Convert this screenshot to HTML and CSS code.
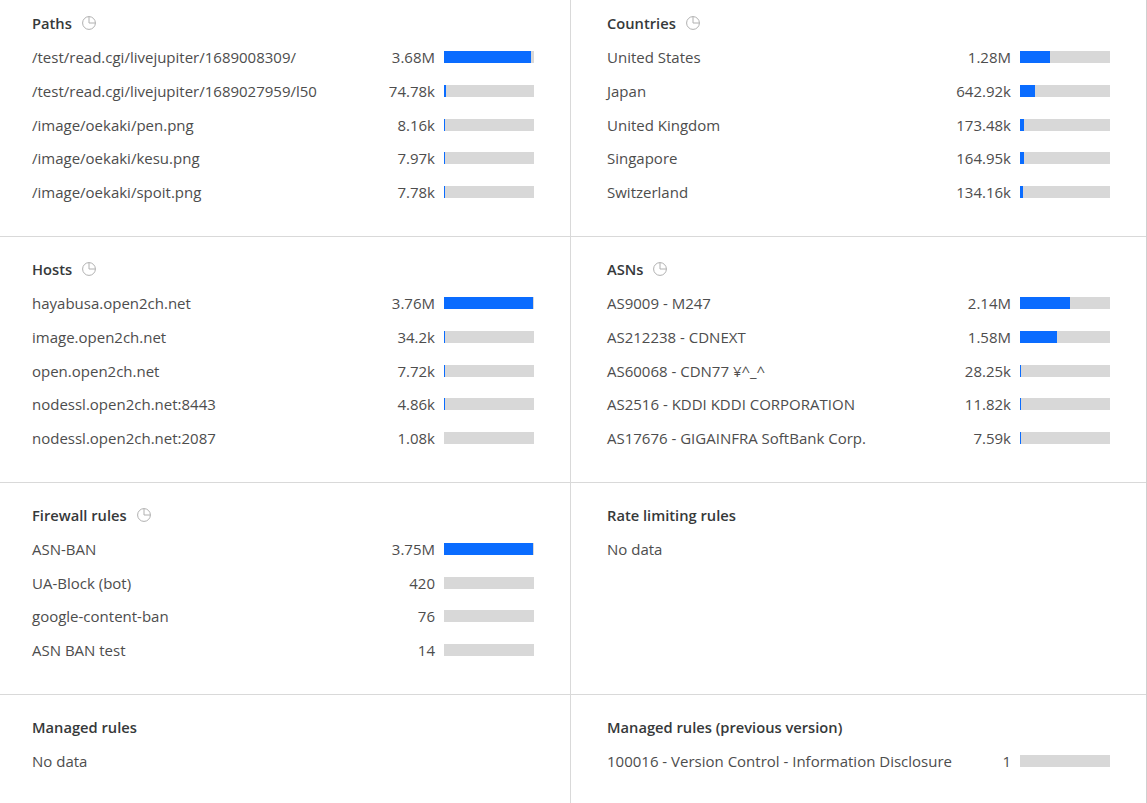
FILE: index.html
```html
<!DOCTYPE html>
<html lang="en">
<head>
<meta charset="utf-8">
<title>Analytics</title>
<link rel="stylesheet" href="styles.css">
</head>
<body>
<svg class="defs" width="0" height="0"><symbol id="pie" viewBox="0 0 14 14"><circle cx="7" cy="7" r="6.4" fill="none" stroke="#b0b0b0" stroke-width="1"/><path d="M7 .6V7H13.4" fill="none" stroke="#b0b0b0" stroke-width="1"/></symbol></svg>
<main class="grid">
<section class="cell first left">
<h3 class="title">Paths<svg class="pie"><use href="#pie"/></svg></h3>
<div class="row"><span class="name">/test/read.cgi/livejupiter/1689008309/</span><span class="val">3.68M</span><span class="bar"><i style="width:87px"></i></span></div>
<div class="row"><span class="name">/test/read.cgi/livejupiter/1689027959/l50</span><span class="val">74.78k</span><span class="bar"><i style="width:2px"></i></span></div>
<div class="row"><span class="name">/image/oekaki/pen.png</span><span class="val">8.16k</span><span class="bar"><i style="width:1px"></i></span></div>
<div class="row"><span class="name">/image/oekaki/kesu.png</span><span class="val">7.97k</span><span class="bar"><i style="width:1px"></i></span></div>
<div class="row"><span class="name">/image/oekaki/spoit.png</span><span class="val">7.78k</span><span class="bar"><i style="width:1px"></i></span></div>
</section>
<section class="cell first right">
<h3 class="title">Countries<svg class="pie"><use href="#pie"/></svg></h3>
<div class="row"><span class="name">United States</span><span class="val">1.28M</span><span class="bar"><i style="width:30px"></i></span></div>
<div class="row"><span class="name">Japan</span><span class="val">642.92k</span><span class="bar"><i style="width:15px"></i></span></div>
<div class="row"><span class="name">United Kingdom</span><span class="val">173.48k</span><span class="bar"><i style="width:4px"></i></span></div>
<div class="row"><span class="name">Singapore</span><span class="val">164.95k</span><span class="bar"><i style="width:4px"></i></span></div>
<div class="row"><span class="name">Switzerland</span><span class="val">134.16k</span><span class="bar"><i style="width:3px"></i></span></div>
</section>
<section class="cell left">
<h3 class="title">Hosts<svg class="pie"><use href="#pie"/></svg></h3>
<div class="row"><span class="name">hayabusa.open2ch.net</span><span class="val">3.76M</span><span class="bar"><i style="width:89px"></i></span></div>
<div class="row"><span class="name">image.open2ch.net</span><span class="val">34.2k</span><span class="bar"><i style="width:1px"></i></span></div>
<div class="row"><span class="name">open.open2ch.net</span><span class="val">7.72k</span><span class="bar"><i style="width:1px"></i></span></div>
<div class="row"><span class="name">nodessl.open2ch.net:8443</span><span class="val">4.86k</span><span class="bar"><i style="width:1px"></i></span></div>
<div class="row"><span class="name">nodessl.open2ch.net:2087</span><span class="val">1.08k</span><span class="bar"></span></div>
</section>
<section class="cell right">
<h3 class="title">ASNs<svg class="pie"><use href="#pie"/></svg></h3>
<div class="row"><span class="name">AS9009 - M247</span><span class="val">2.14M</span><span class="bar"><i style="width:50px"></i></span></div>
<div class="row"><span class="name">AS212238 - CDNEXT</span><span class="val">1.58M</span><span class="bar"><i style="width:37px"></i></span></div>
<div class="row"><span class="name">AS60068 - CDN77 ¥^_^</span><span class="val">28.25k</span><span class="bar"><i style="width:1px"></i></span></div>
<div class="row"><span class="name">AS2516 - KDDI KDDI CORPORATION</span><span class="val">11.82k</span><span class="bar"><i style="width:1px"></i></span></div>
<div class="row"><span class="name">AS17676 - GIGAINFRA SoftBank Corp.</span><span class="val">7.59k</span><span class="bar"><i style="width:1px"></i></span></div>
</section>
<section class="cell left">
<h3 class="title">Firewall rules<svg class="pie"><use href="#pie"/></svg></h3>
<div class="row"><span class="name">ASN-BAN</span><span class="val">3.75M</span><span class="bar"><i style="width:89px"></i></span></div>
<div class="row"><span class="name">UA-Block (bot)</span><span class="val">420</span><span class="bar"></span></div>
<div class="row"><span class="name">google-content-ban</span><span class="val">76</span><span class="bar"></span></div>
<div class="row"><span class="name">ASN BAN test</span><span class="val">14</span><span class="bar"></span></div>
</section>
<section class="cell right">
<h3 class="title">Rate limiting rules</h3>
<div class="row"><span class="name">No data</span></div>
</section>
<section class="cell left last">
<h3 class="title">Managed rules</h3>
<div class="row"><span class="name">No data</span></div>
</section>
<section class="cell right last">
<h3 class="title">Managed rules (previous version)</h3>
<div class="row"><span class="name">100016 - Version Control - Information Disclosure</span><span class="val">1</span><span class="bar"></span></div>
</section>
</main>
</body>
</html>
```
FILE: styles.css
```css
html, body { margin: 0; padding: 0; background: #fff; overflow: hidden; }
body { height: 803px; font-family: "Open Sans", "Noto Sans", sans-serif; font-size: 15px; color: #4d4d4d; }
.defs { display: block; height: 0; }
.grid { display: grid; width: 1146px; grid-template-columns: 571px 575px; border-right: 1px solid #d0d0d0; }
.cell { box-sizing: border-box; padding-top: 16px; padding-bottom: 27.4px; border-bottom: 1px solid #d9d9d9; }
.left { padding-left: 32px; padding-right: 36px; border-right: 1px solid #d9d9d9; }
.right { padding-left: 36px; padding-right: 36px; }
.first { padding-top: 7px; }
.last { border-bottom: 0; height: 108px; padding-top: 15.4px; }
.title { box-sizing: border-box; display: flex; align-items: center; margin: 0; padding-bottom: 1px; height: 33.6px; font-size: 14.7px; line-height: 20px; font-weight: 600; color: #36393a; }
.pie { width: 14px; height: 14px; margin-left: 10px; }
.row { display: flex; align-items: center; height: 33.6px; line-height: 20px; }
.name { flex: 1; white-space: nowrap; }
.val { margin-left: 8px; white-space: nowrap; }
.bar { display: block; width: 90px; height: 12px; margin-left: 9px; background: #d8d8d8; }
.bar i { display: block; height: 100%; background: #0a6cff; }
```
